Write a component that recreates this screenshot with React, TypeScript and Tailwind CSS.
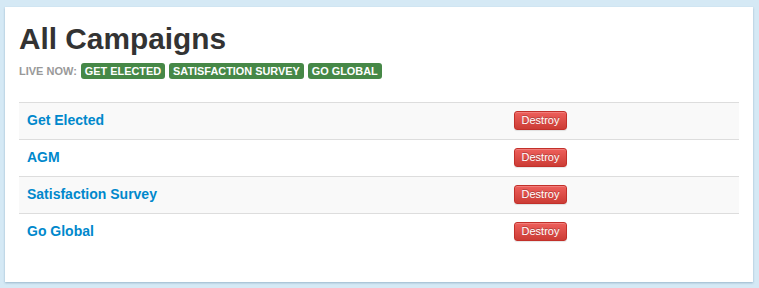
import React from "react";

const rows = [
  { name: "Get Elected", striped: true },
  { name: "AGM", striped: false },
  { name: "Satisfaction Survey", striped: true },
  { name: "Go Global", striped: false },
];

const live = ["Get Elected", "Satisfaction Survey", "Go Global"];

export default function App() {
  return (
    <div
      className="w-[759px] h-[288px] bg-[#d5e9f5] pt-[7px] pl-[5px]"
      style={{ fontFamily: '"Liberation Sans", Arial, sans-serif' }}
    >
      <div className="w-[748px] h-[275px] bg-white shadow-[0_1px_2px_rgba(80,120,150,0.45)] px-[14px] pt-[14px]">
        <h1 className="text-[29.8px] leading-[36px] font-bold text-[#333333]">All Campaigns</h1>
        <div className="flex items-center gap-[4px] mt-[5px] h-[18px]">
          <span className="text-[11px] font-bold text-[#999999] uppercase">Live now:</span>
          {live.map((l) => (
            <span
              key={l}
              className="bg-[#468847] text-white text-[10.9px] font-bold uppercase leading-[14px] px-[4px] py-[1px] rounded-[3px]"
            >
              {l}
            </span>
          ))}
        </div>
        <div className="mt-[22px] w-[720px] border-t border-[#dddddd]">
          {rows.map((r, i) => (
            <div
              key={r.name}
              className={`flex h-[37px] ${i < rows.length - 1 ? "border-b border-[#dddddd]" : ""} ${
                r.striped ? "bg-[#f9f9f9]" : "bg-white"
              }`}
            >
              <div className="w-[487px] px-[8px] pt-[7px] text-[14px] leading-[20px] font-bold text-[#0088cc]">
                {r.name}
              </div>
              <div className="flex items-start px-[8px] pt-[8px]">
                <button className="h-[19px] w-[53px] rounded-[3px] text-[11px] leading-[15px] text-white border border-[#c2302a] bg-gradient-to-b from-[#ee5f5b] to-[#cc3c35] shadow-[inset_0_1px_0_rgba(255,255,255,0.2),0_1px_1px_rgba(0,0,0,0.1)] [text-shadow:0_-1px_0_rgba(0,0,0,0.25)]">
                  Destroy
                </button>
              </div>
            </div>
          ))}
        </div>
      </div>
    </div>
  );
}
